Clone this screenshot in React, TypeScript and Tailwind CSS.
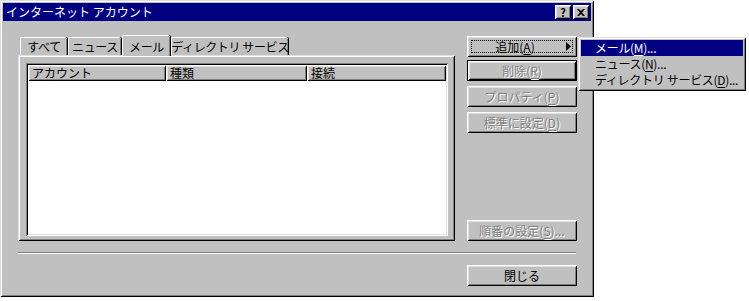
import React from "react";

const raised =
  "shadow-[inset_1px_1px_#dfdfdf,inset_-1px_-1px_#000,inset_2px_2px_#fff,inset_-2px_-2px_#808080]";
const btnRaised =
  "shadow-[inset_1px_1px_#fff,inset_-1px_-1px_#000,inset_2px_2px_#dfdfdf,inset_-2px_-2px_#808080]";
const sunken =
  "shadow-[inset_1px_1px_#808080,inset_-1px_-1px_#fff,inset_2px_2px_#000,inset_-2px_-2px_#dfdfdf]";
const disabledText = "text-[#808080] [text-shadow:1px_1px_0_#fff]";

const U = ({ c }: { c: string }) => <span className="underline underline-offset-2">{c}</span>;

const Btn = ({
  children,
  disabled,
  className = "",
}: {
  children: React.ReactNode;
  disabled?: boolean;
  className?: string;
}) => (
  <div
    className={`w-[110px] h-[21px] bg-[#c0c0c0] flex items-center justify-center whitespace-nowrap ${btnRaised} ${
      disabled ? disabledText : "text-black"
    } ${className}`}
  >
    {children}
  </div>
);

const Tab = ({ label, w, active }: { label: string; w: string; active?: boolean }) => (
  <div
    className={`${w} ${
      active ? "h-[21px] -mb-[1px] relative z-10" : "h-[18px]"
    } bg-[#c0c0c0] border-t border-l border-white rounded-tl-[2px] rounded-tr-[2px] shadow-[inset_-1px_0_#808080,1px_0_#000] flex items-center justify-center pt-[1px] whitespace-nowrap tracking-[-0.4px]`}
  >
    {label}
  </div>
);

export default function App() {
  return (
    <div
      className="w-[749px] h-[301px] bg-white text-[12px] leading-none select-none whitespace-nowrap"
      style={{ fontFamily: '"Noto Sans CJK JP", "Noto Sans", sans-serif' }}
    >
      <div className={`relative w-[594px] h-[297px] bg-[#c0c0c0] p-[3px] ${raised}`}>
        {/* title bar */}
        <div className="h-[18px] bg-[#000080] flex items-center justify-between pl-[3px] pr-[2px]">
          <span className="text-white">インターネット アカウント</span>
          <div className="flex gap-[2px]">
            <div className={`w-[16px] h-[14px] bg-[#c0c0c0] flex items-center justify-center font-bold text-[11px] ${btnRaised}`}>
              ?
            </div>
            <div className={`w-[16px] h-[14px] bg-[#c0c0c0] flex items-center justify-center ${btnRaised}`}>
              <svg width="8" height="7" viewBox="0 0 8 7">
                <path d="M0 0h2l2 2 2-2h2L5 3.5 8 7H6L4 5 2 7H0l3-3.5z" fill="#000" />
              </svg>
            </div>
          </div>
        </div>

        {/* body */}
        <div className="pl-[15px] pt-[14px]">
          <div className="flex h-[206px]">
            <div className="w-[437px] flex flex-col">
              <div className="flex items-end h-[20px] pl-[2px]">
                <Tab label="すべて" w="w-[47px]" />
                <Tab label="ニュース" w="w-[53px] ml-[1px]" />
                <Tab label="メール" w="w-[48px] ml-[1px]" active />
                <Tab label="ディレクトリ サービス" w="w-[117px] ml-[1px]" />
              </div>
              <div className={`h-[186px] bg-[#c0c0c0] pt-[8px] pl-[8px] ${raised}`}>
                <div className={`w-[422px] h-[173px] bg-white p-[2px] ${sunken}`}>
                  <div className="flex h-[16px]">
                    <div className={`w-[138px] bg-[#c0c0c0] flex items-center pl-[4px] ${btnRaised}`}>
                      アカウント
                    </div>
                    <div className={`w-[141px] bg-[#c0c0c0] flex items-center pl-[4px] ${btnRaised}`}>
                      種類
                    </div>
                    <div className={`w-[139px] bg-[#c0c0c0] flex items-center pl-[4px] ${btnRaised}`}>
                      接続
                    </div>
                  </div>
                </div>
              </div>
            </div>

            <div className="ml-[12px] pt-[1px] flex flex-col">
              <Btn className="relative pr-[14px]">
                <span>
                  追加(<U c="A" />)
                </span>
                <div className="absolute inset-[4px] border border-dotted border-black" />
                <svg className="absolute right-[6px] top-[6px]" width="5" height="9" viewBox="0 0 5 9">
                  <path d="M0 0l5 4.5L0 9z" fill="#000" />
                </svg>
              </Btn>
              <div className="mt-[3px] w-[110px] h-[21px] border border-black">
                <Btn className="!w-[108px] !h-[19px]" disabled>
                  <span>
                    削除(<U c="R" />)
                  </span>
                </Btn>
              </div>
              <Btn className="mt-[5px]" disabled>
                <span>
                  プロパティ(<U c="P" />)
                </span>
              </Btn>
              <Btn className="mt-[5px]" disabled>
                <span>
                  標準に設定(<U c="D" />)
                </span>
              </Btn>
              <Btn className="mt-[87px]" disabled>
                <span>
                  順番の設定(<U c="S" />)...
                </span>
              </Btn>
            </div>
          </div>

          <div className="mt-[11px] w-[558px] border-t border-b border-t-[#808080] border-b-white" />

          <div className="mt-[11px] flex justify-end w-[559px]">
            <Btn>閉じる</Btn>
          </div>
        </div>

        {/* popup menu */}
        <div
          className={`absolute left-[578px] top-[37px] w-[168px] h-[54px] bg-[#c0c0c0] p-[3px] z-20 tracking-[-0.3px] ${raised}`}
        >
          <div className="h-[16px] bg-[#000080] text-white flex items-center pl-[14px]">
            <span>
              メール(<U c="M" />)...
            </span>
          </div>
          <div className="h-[16px] flex items-center pl-[14px]">
            <span>
              ニュース(<U c="N" />)...
            </span>
          </div>
          <div className="h-[16px] flex items-center pl-[14px]">
            <span>
              ディレクトリ サービス(<U c="D" />)...
            </span>
          </div>
        </div>
      </div>
    </div>
  );
}
